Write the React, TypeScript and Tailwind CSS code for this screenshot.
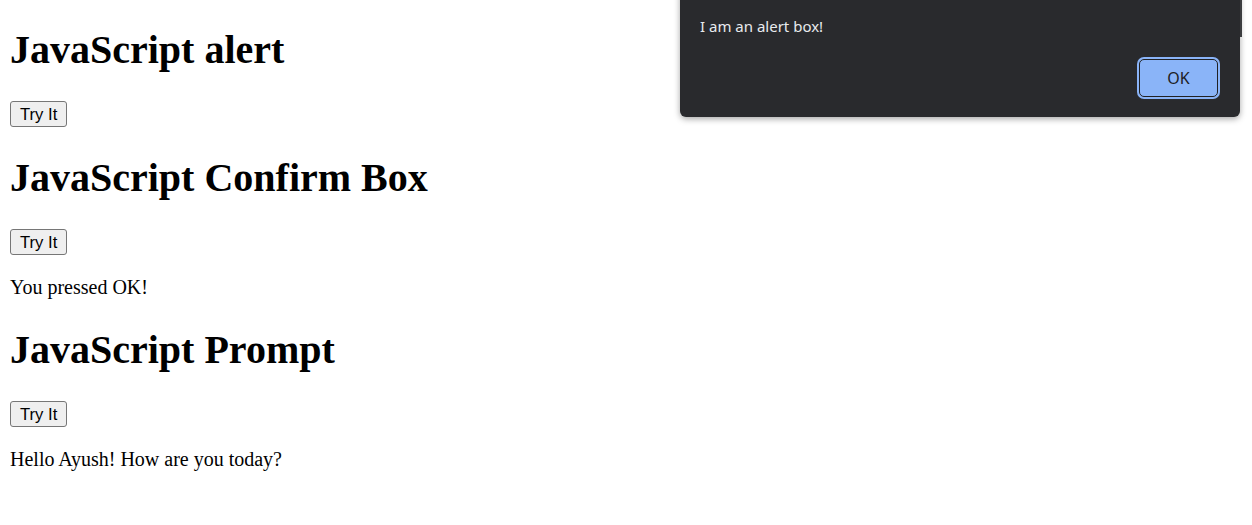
import React from "react";

function TryIt() {
  return (
    <div className="flex">
      <button
        className="h-[26px] px-[9px] border border-[#767676] rounded-[3px] bg-[#efefef] text-black text-[16.67px] leading-[19px]"
        style={{ fontFamily: '"Liberation Sans", Arial, sans-serif' }}
      >
        Try It
      </button>
    </div>
  );
}

function H1({ children, mt }: { children: React.ReactNode; mt: string }) {
  return (
    <h1
      className={`${mt} text-[40px] leading-[46px] font-bold text-black`}
      style={{ fontFamily: '"Liberation Serif", "Times New Roman", serif' }}
    >
      {children}
    </h1>
  );
}

function P({ children, mt }: { children: React.ReactNode; mt: string }) {
  return (
    <p
      className={`${mt} text-[20px] leading-[23px] text-black`}
      style={{ fontFamily: '"Liberation Serif", "Times New Roman", serif' }}
    >
      {children}
    </p>
  );
}

export default function App() {
  return (
    <div className="relative w-[1252px] h-[525px] bg-white overflow-hidden">
      <div className="flex flex-col pl-[10px]">
        <H1 mt="mt-[27px]">JavaScript alert</H1>
        <div className="mt-[28px]">
          <TryIt />
        </div>
        <H1 mt="mt-[28px]">JavaScript Confirm Box</H1>
        <div className="mt-[28px]">
          <TryIt />
        </div>
        <P mt="mt-[21px]">You pressed OK!</P>
        <H1 mt="mt-[28px]">JavaScript Prompt</H1>
        <div className="mt-[28px]">
          <TryIt />
        </div>
        <P mt="mt-[21px]">Hello Ayush! How are you today?</P>
      </div>

      {/* alert dialog */}
      <div
        className="absolute left-[680px] top-[-40px] w-[560px] h-[157px] bg-[#292a2d] rounded-[6px] shadow-[0_2px_6px_rgba(0,0,0,0.35)] flex flex-col px-[20px]"
        style={{ fontFamily: '"Segoe UI", "Noto Sans", sans-serif' }}
      >
        <div className="mt-[56px] text-[15px] leading-[20px] text-[#e8eaed]">
          I am an alert box!
        </div>
        <div className="flex justify-end mt-[21px]">
          <div className="w-[83px] h-[42px] rounded-[7px] bg-[#8ab4f8] p-[2px]">
            <div className="w-full h-full rounded-[5px] border border-[#202124] bg-[#8ab4f8] flex items-center justify-center text-[16px] text-[#202124]">
              OK
            </div>
          </div>
        </div>
      </div>
      <div className="absolute left-[1240px] top-0 w-[2px] h-[37px] bg-[#3c3d40]" />
    </div>
  );
}
